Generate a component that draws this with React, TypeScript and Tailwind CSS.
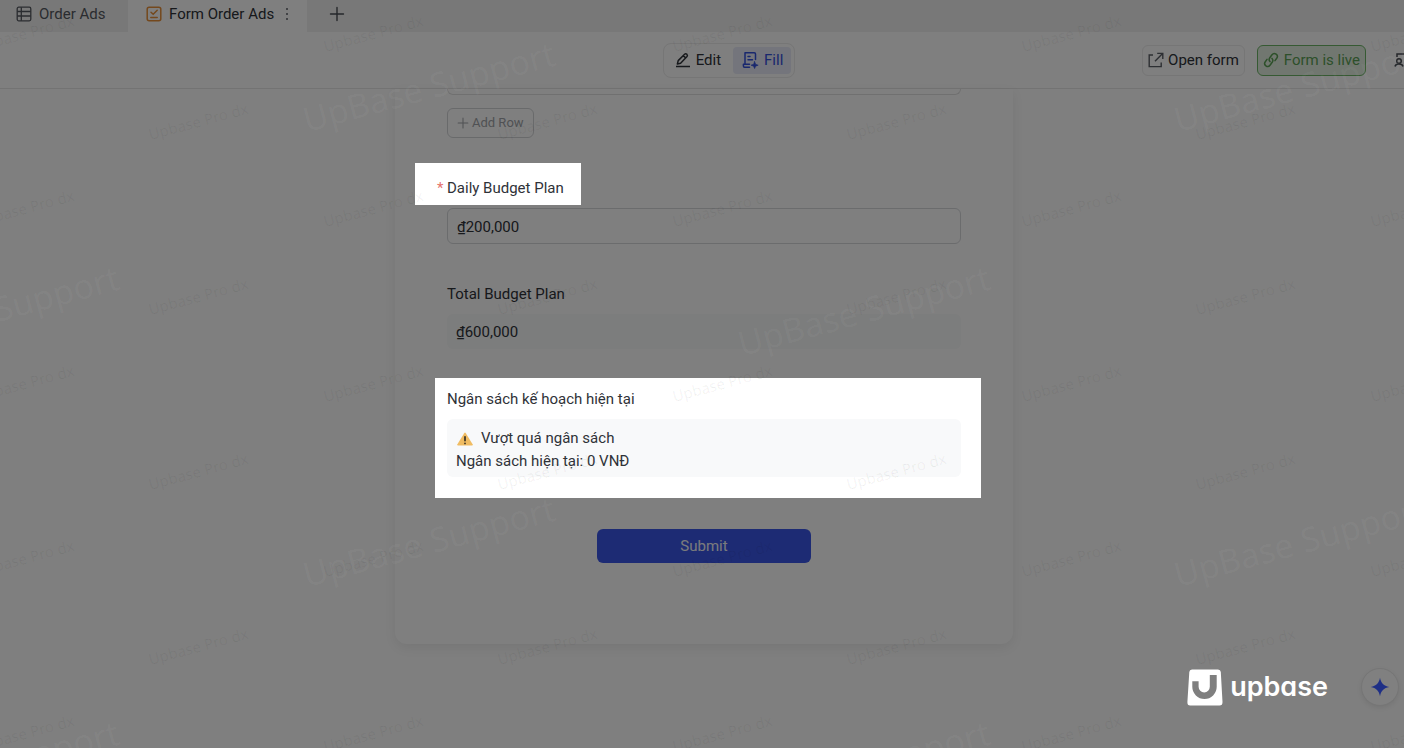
import type { ReactNode, SVGProps } from "react";

type FieldProps = {
  id: string;
  label: string;
  children: ReactNode;
};

const smallMarks = Array.from({ length: 30 }, (_, i) => i);
const largeMarks = Array.from({ length: 6 }, (_, i) => i);

export default function App() {
  return (
    <div className="relative flex min-h-screen flex-col overflow-hidden bg-[#fefefe] font-[Roboto,sans-serif] text-[15px] text-[#2f3238]">
      <TabBar />
      <Toolbar />
      <main className="flex-1 pr-6 pl-7">
        <OrderForm />
      </main>

      {/* Dimmed backdrop. Highlighted blocks in the form sit above it (z-20). */}
      <div aria-hidden className="pointer-events-none absolute inset-0 z-10 bg-black/50" />
      <Watermarks />

      <div className="absolute right-[5px] bottom-[42px] z-40 flex items-center gap-[33px]">
        <BrandLogo />
        <button
          type="button"
          aria-label="Assistant"
          className="flex h-[38px] w-[38px] items-center justify-center rounded-full border border-[#767676] bg-[#808080] shadow-[0_2px_5px_rgba(0,0,0,0.08)]"
        >
          <IconSpark className="h-5 w-5 text-[#1e2f86]" />
        </button>
      </div>
    </div>
  );
}

function TabBar() {
  return (
    <nav className="flex h-8 bg-[#f1f1f1]">
      <a href="#order-ads" className="flex w-32 items-center gap-[7px] pb-1 pl-4 text-[#555960]">
        <IconTable className="h-4 w-4" />
        Order Ads
      </a>
      <div className="flex w-[179px] items-center bg-[#fefefe] pb-1 pl-[18px]">
        <a href="#form-order-ads" aria-current="page" className="flex items-center gap-[7px]">
          <IconFormCheck className="h-4 w-4 text-[#e8913a]" />
          Form Order Ads
        </a>
        <button type="button" aria-label="Tab options" className="ml-[7px] text-[#5b5f66]">
          <IconDots className="h-4 w-3" />
        </button>
      </div>
      <button type="button" aria-label="Add tab" className="ml-[22px] pb-1 text-[#4a4e55]">
        <IconPlus className="h-4 w-4" />
      </button>
    </nav>
  );
}

function Toolbar() {
  return (
    // Wider than the window: the last actions run off the right edge.
    <header className="grid h-[57px] w-[calc(100%+54px)] grid-cols-[1fr_auto_1fr] items-center border-b border-[#e6e6e6]">
      <div />
      <div className="flex h-[35px] items-center rounded-lg border border-[#ececec] p-[3px]">
        <button type="button" className="flex h-full items-center gap-[5px] px-2">
          <IconPen className="h-4 w-4" />
          Edit
        </button>
        <button
          type="button"
          aria-pressed
          className="ml-1 flex h-full items-center gap-[5px] rounded bg-[#e8ebf8] px-2 text-[#3350dd]"
        >
          <IconFill className="h-[18px] w-[18px]" />
          Fill
        </button>
      </div>
      <div className="flex items-center justify-end gap-3">
        <button type="button" className="flex h-[31px] items-center gap-1 rounded-md border border-[#ececec] px-[5px]">
          <IconOpen className="h-4 w-4 text-[#5b5f66]" />
          Open form
        </button>
        <button
          type="button"
          className="flex h-[31px] items-center gap-[5px] rounded-md border border-[#6cb566] bg-[#e3efe1] px-[5px] text-[#5aa054]"
        >
          <IconLink className="h-4 w-4" />
          Form is live
        </button>
        <button type="button" aria-label="Form members" className="w-20 pl-4 text-[#4a4e55]">
          <IconMembers className="h-4 w-4" />
        </button>
      </div>
    </header>
  );
}

function OrderForm() {
  return (
    <form
      className="mx-auto w-full max-w-[618px] rounded-b-xl bg-white px-[52px] pb-[81px] shadow-[0_4px_12px_rgba(0,0,0,0.07)]"
      onSubmit={(e) => e.preventDefault()}
    >
      <div className="h-[6px] rounded-b-md border border-t-0 border-[#e0e0e0]" />
      <button
        type="button"
        className="mt-[13px] flex h-[30px] items-center gap-[3px] rounded-md border border-[#d2d4d7] px-[9px] text-[13px] text-[#a0a3a8]"
      >
        <IconPlus className="h-3 w-3" />
        Add Row
      </button>

      <div className="mt-[38px] flex flex-col gap-[38px]">
        <div>
          <div className="relative z-20 -mt-[13px] -ml-8 mb-[3px] w-fit bg-white pt-[13px] pr-[17px] pb-[5px] pl-8">
            <label htmlFor="daily" className="block leading-6">
              <span aria-hidden className="absolute left-[22px] text-[#e5726d]">
                *
              </span>
              Daily Budget Plan
            </label>
          </div>
          <input
            id="daily"
            defaultValue="₫200,000"
            className="h-9 w-full rounded-md border border-[#d6d8db] bg-transparent px-[9px] pt-[2px] outline-none"
          />
        </div>

        <Field id="total" label="Total Budget Plan">
          <output id="total" className="flex h-[35px] items-center rounded-md bg-[#f9fafa] px-[9px] pt-[2px]">
            ₫600,000
          </output>
        </Field>

        <div className="relative z-20 -mt-[9px] -mr-5 -mb-[21px] -ml-3 bg-white pt-[9px] pr-5 pb-[21px] pl-3">
          <Field id="current" label="Ngân sách kế hoạch hiện tại">
            <output id="current" className="block rounded-md bg-[#f8f9fa] px-[9px] pt-2 pb-1 leading-[23px]">
              <span className="flex items-center gap-[7px]">
                <IconWarning className="h-4 w-[18px]" />
                Vượt quá ngân sách
              </span>
              <span className="block">Ngân sách hiện tại: 0 VNĐ</span>
            </output>
          </Field>
        </div>
      </div>

      <button
        type="submit"
        className="mx-auto mt-[52px] block h-[34px] w-[214px] rounded-md bg-[#3a57e8] text-[#f4f5fa]"
      >
        Submit
      </button>
    </form>
  );
}

function Field({ id, label, children }: FieldProps) {
  return (
    <div>
      <label htmlFor={id} className="mb-2 block leading-6">
        {label}
      </label>
      {children}
    </div>
  );
}

/** Two tilted repeats of the small mark, offset by half a cell, plus the large one. */
function Watermarks() {
  return (
    <div
      aria-hidden
      className="pointer-events-none absolute inset-0 z-30 overflow-hidden font-['Noto_Sans',sans-serif] select-none"
    >
      <div className="absolute top-[34px] left-[24px] grid auto-rows-[175px] grid-cols-[repeat(6,349px)] text-[15px] text-black/6">
        {smallMarks.map((i) => (
          <Mark key={i}>Upbase Pro dx</Mark>
        ))}
      </div>
      <div className="absolute -top-[54px] -left-[150px] grid auto-rows-[175px] grid-cols-[repeat(6,349px)] text-[15px] text-black/6">
        {smallMarks.map((i) => (
          <Mark key={i}>Upbase Pro dx</Mark>
        ))}
      </div>
      <div className="absolute -top-[141px] -left-[7px] grid auto-rows-[455px] grid-cols-[repeat(2,871px)] text-[34px] text-white/4">
        {largeMarks.map((i) => (
          <Mark key={i}>UpBase Support</Mark>
        ))}
      </div>
      <div className="absolute top-[83px] -left-[443px] grid auto-rows-[455px] grid-cols-[repeat(2,871px)] text-[34px] text-white/4">
        {largeMarks.map((i) => (
          <Mark key={i}>UpBase Support</Mark>
        ))}
      </div>
    </div>
  );
}

function Mark({ children }: { children: ReactNode }) {
  return (
    <span className="flex items-center justify-center">
      <span className="-rotate-15">{children}</span>
    </span>
  );
}

function BrandLogo() {
  return (
    <div className="flex items-center gap-[7px] text-white">
      <svg viewBox="0 0 36 37" className="h-[37px] w-9" aria-hidden>
        <path
          fill="currentColor"
          fillRule="evenodd"
          d="M5 0.5H31Q33.6 0.5 33.8 3L35.5 33Q35.6 36.5 32.5 36.5H3.2Q0.2 36.5 0.4 33L2.3 3Q2.5 0.5 5 0.5ZM5.3 12.2V17.8A12.2 12.2 0 0 0 29.7 17.8V6H22.8V17.8A5.6 5.6 0 0 1 11.6 17.8V12.2Z"
        />
      </svg>
      <span className="font-[Inter,sans-serif] text-[27px] leading-8 font-semibold [font-feature-settings:'cv11']">
        upbase
      </span>
    </div>
  );
}

// Inline icons

function IconTable(props: SVGProps<SVGSVGElement>) {
  return (
    <svg viewBox="0 0 16 16" fill="none" stroke="currentColor" strokeWidth="1.3" aria-hidden {...props}>
      <rect x="1.2" y="1.2" width="13.6" height="13.6" rx="1.5" />
      <path d="M1.2 5.5H14.8M1.2 10H14.8M5.3 1.2V14.8" />
    </svg>
  );
}

function IconFormCheck(props: SVGProps<SVGSVGElement>) {
  return (
    <svg viewBox="0 0 16 16" fill="none" stroke="currentColor" strokeWidth="1.5" strokeLinecap="round" aria-hidden {...props}>
      <rect x="1.2" y="1.2" width="13.6" height="13.6" rx="2" />
      <path d="M5 6.2L7.2 8.3L11.2 4.3M4.8 11.5H11.2" />
    </svg>
  );
}

function IconDots(props: SVGProps<SVGSVGElement>) {
  return (
    <svg viewBox="0 0 12 16" fill="currentColor" aria-hidden {...props}>
      <circle cx="6" cy="3" r="1" />
      <circle cx="6" cy="8" r="1" />
      <circle cx="6" cy="13" r="1" />
    </svg>
  );
}

function IconPlus(props: SVGProps<SVGSVGElement>) {
  return (
    <svg viewBox="0 0 16 16" fill="none" stroke="currentColor" strokeWidth="1.4" strokeLinecap="round" aria-hidden {...props}>
      <path d="M8 1.5V14.5M1.5 8H14.5" />
    </svg>
  );
}

function IconPen(props: SVGProps<SVGSVGElement>) {
  return (
    <svg viewBox="0 0 16 16" fill="none" stroke="currentColor" strokeWidth="1.5" strokeLinejoin="round" aria-hidden {...props}>
      <path d="M2.4 12L3.2 8.6L9.6 2.2Q10.6 1.2 11.8 2.2Q13 3.4 12 4.6L5.6 11.2L2.4 12ZM8.3 3.6L10.7 6M1 14.4H15" />
    </svg>
  );
}

function IconFill(props: SVGProps<SVGSVGElement>) {
  return (
    <svg viewBox="0 0 18 18" fill="none" stroke="currentColor" strokeWidth="1.5" strokeLinecap="round" strokeLinejoin="round" aria-hidden {...props}>
      <path d="M14.5 8.5V3Q14.5 1.8 13.3 1.8H4V13.2M2.4 13.2V15Q2.4 16.2 3.6 16.2H8.5M2.4 13.2H8.5M7 5.5H9M7 8.8H11.5" />
      <path fill="currentColor" strokeWidth="0.6" d="M13.6 10.6L14.6 13.2L17.2 14.2L14.6 15.2L13.6 17.6L12.6 15.2L10 14.2L12.6 13.2Z" />
    </svg>
  );
}

function IconOpen(props: SVGProps<SVGSVGElement>) {
  return (
    <svg viewBox="0 0 16 16" fill="none" stroke="currentColor" strokeWidth="1.4" aria-hidden {...props}>
      <path d="M5 3H1.2V14.6H13.2V10.6M9.2 1.4H14.8V7M14.6 1.6L7 9.2" />
    </svg>
  );
}

function IconLink(props: SVGProps<SVGSVGElement>) {
  return (
    <svg viewBox="0 0 16 16" fill="none" stroke="currentColor" strokeWidth="1.5" strokeLinecap="round" aria-hidden {...props}>
      <path d="M7 9.6A3 3 0 0 1 6.8 5.8L9 2.8A2.9 2.9 0 0 1 13.7 6.3L12 8.6" />
      <path d="M9 6.4A3 3 0 0 1 9.2 10.2L7 13.2A2.9 2.9 0 0 1 2.3 9.7L4 7.4" />
    </svg>
  );
}

function IconMembers(props: SVGProps<SVGSVGElement>) {
  return (
    <svg viewBox="0 0 16 16" fill="none" stroke="currentColor" strokeWidth="1.5" aria-hidden {...props}>
      <path d="M3 5V2H14V9" />
      <circle cx="5" cy="9" r="2.3" />
      <path d="M1 14.5Q1.5 12 5 12Q8.5 12 9 14.5" />
    </svg>
  );
}

function IconWarning(props: SVGProps<SVGSVGElement>) {
  return (
    <svg viewBox="0 0 18 16" aria-hidden {...props}>
      <path fill="#f0bc62" d="M8.2 2.2Q9 1 9.8 2.2L16.6 13.2Q17.2 14.5 15.8 14.5H2.2Q0.8 14.5 1.4 13.2Z" />
      <path stroke="#3f3728" strokeWidth="1.8" strokeLinecap="round" d="M9 5.8V9.6M9 12.3V12.4" />
    </svg>
  );
}

function IconSpark(props: SVGProps<SVGSVGElement>) {
  return (
    <svg viewBox="0 0 20 20" fill="currentColor" aria-hidden {...props}>
      <path d="M10 0.8C11 6.2 13.8 9 19.2 10C13.8 11 11 13.8 10 19.2C9 13.8 6.2 11 0.8 10C6.2 9 9 6.2 10 0.8Z" />
    </svg>
  );
}
